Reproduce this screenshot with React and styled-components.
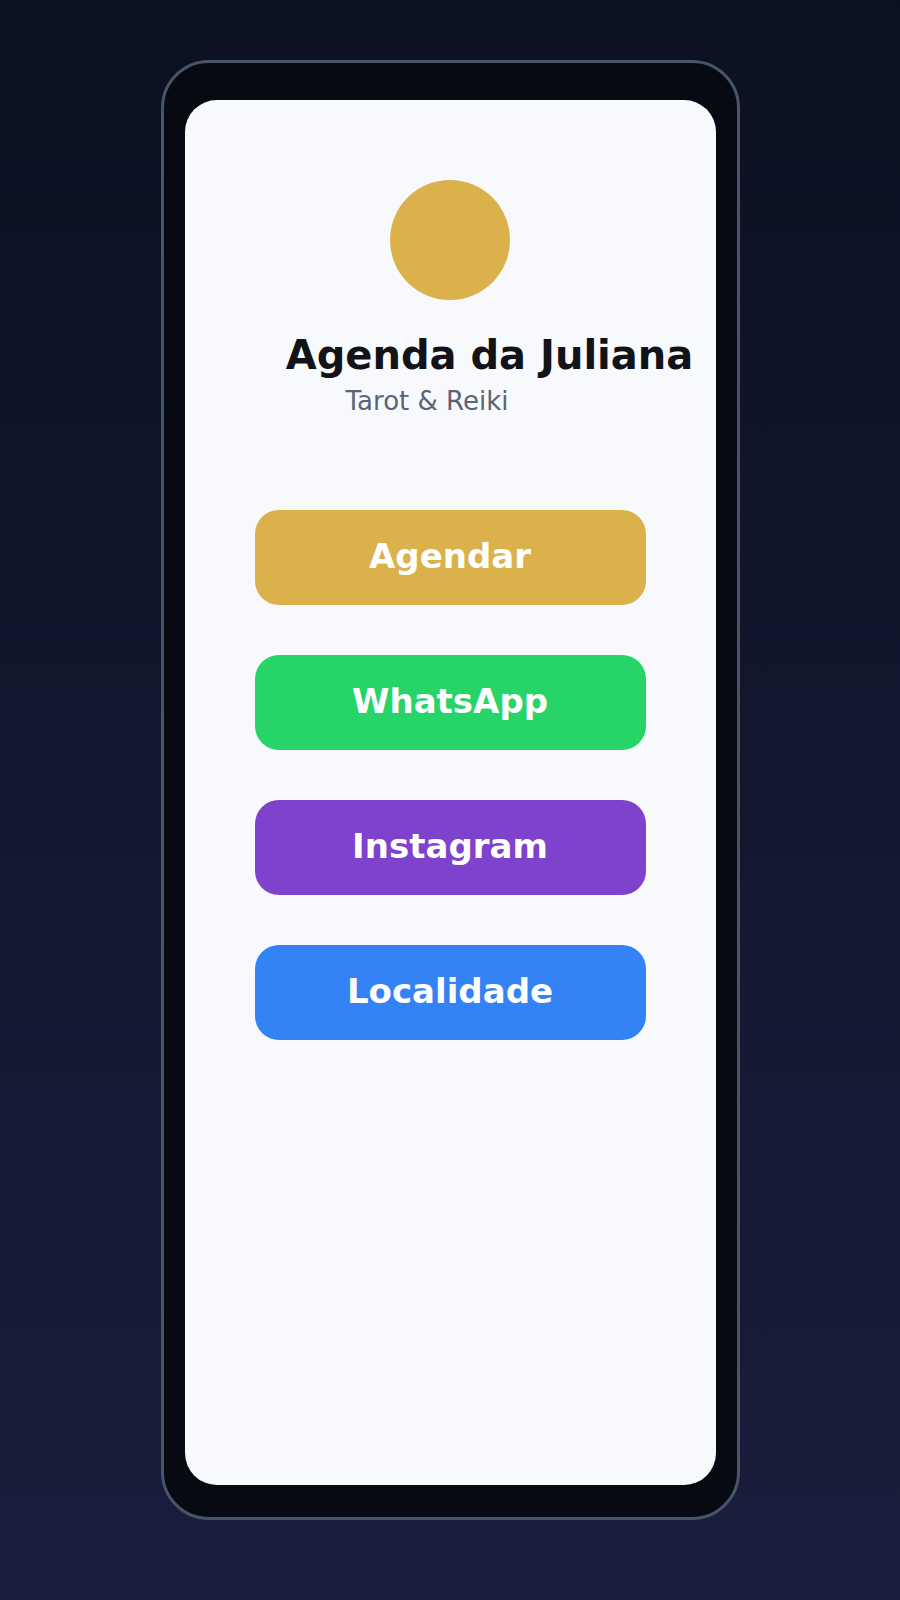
import React from "react";
import styled, { createGlobalStyle } from "styled-components";

const Global = createGlobalStyle`
  html, body { margin: 0; padding: 0; }
  body {
    min-height: 1600px;
    background: linear-gradient(180deg, #0b1120 0%, #1a1d3c 100%);
    font-family: "DejaVu Sans", "Noto Sans", sans-serif;
  }
  #root { min-height: 1600px; padding-top: 60px; box-sizing: border-box; }
`;

const Phone = styled.div`
  box-sizing: border-box;
  width: 579px;
  height: 1460px;
  margin: 0 auto;
  padding: 37px 21px 32px;
  border: 3px solid #475569;
  border-radius: 48px;
  background: #070a12;
`;

const Screen = styled.div`
  height: 100%;
  border-radius: 32px;
  background: #f7f9fc;
  display: flex;
  flex-direction: column;
  align-items: center;
  padding-top: 80px;
  box-sizing: border-box;
`;

const Avatar = styled.div`
  width: 120px;
  height: 120px;
  border-radius: 50%;
  background: #dbb14b;
`;

const Title = styled.h1`
  margin: 32px 0 0 79px;
  font-size: 40px;
  line-height: 46px;
  font-weight: 700;
  color: #111318;
  white-space: nowrap;
`;

const Subtitle = styled.p`
  margin: 8px 46px 0 0;
  font-size: 26px;
  line-height: 30px;
  color: #5b6477;
  white-space: nowrap;
`;

const Links = styled.nav`
  margin-top: 94px;
  width: 391px;
  display: flex;
  flex-direction: column;
  gap: 50px;
`;

const LinkButton = styled.a`
  box-sizing: border-box;
  height: 95px;
  padding-bottom: 4px;
  border-radius: 24px;
  background: ${(p) => p.$bg};
  color: #ffffff;
  font-size: 34px;
  font-weight: 700;
  display: flex;
  align-items: center;
  justify-content: center;
  text-decoration: none;
`;

const links = [
  { label: "Agendar", bg: "#dbb14b" },
  { label: "WhatsApp", bg: "#26d468" },
  { label: "Instagram", bg: "#7e42cc" },
  { label: "Localidade", bg: "#3483f6" },
];

export default function App() {
  return (
    <>
      <Global />
      <Phone>
        <Screen>
          <Avatar />
          <Title>Agenda da Juliana</Title>
          <Subtitle>Tarot &amp; Reiki</Subtitle>
          <Links>
            {links.map((l) => (
              <LinkButton key={l.label} $bg={l.bg}>
                {l.label}
              </LinkButton>
            ))}
          </Links>
        </Screen>
      </Phone>
    </>
  );
}
